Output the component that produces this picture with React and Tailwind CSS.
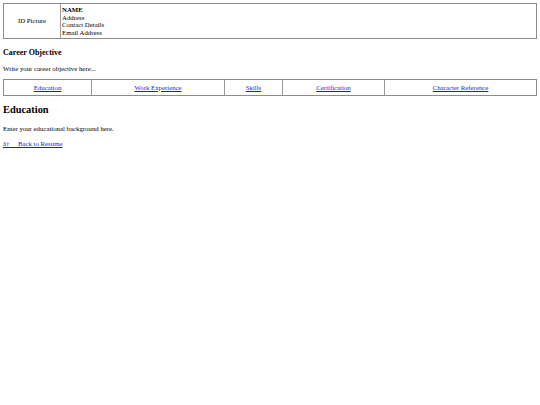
import React from 'react';

const navLinks = [
  { label: 'Education', width: 'w-[87px]' },
  { label: 'Work Experience', width: 'w-[133px]' },
  { label: 'Skills', width: 'w-[58px]' },
  { label: 'Certification', width: 'w-[102px]' },
  { label: 'Character Reference', width: 'flex-1' },
];

const App = () => {
  return (
    <div className="min-h-[405px] bg-white px-[3px] pt-[3px] text-black font-['Liberation_Serif',serif] text-[6.8px] leading-[7.5px]">
      {/* Header: picture + contact info */}
      <div className="flex h-[36px] border border-[#8c8c8c]">
        <div className="w-[57px] flex items-center justify-center border-r-[1.5px] border-[#9a9a9a]">
          ID Picture
        </div>
        <div className="flex-1 flex flex-col justify-center px-[1px]">
          <span className="font-bold">NAME</span>
          <span>Address</span>
          <span>Contact Details</span>
          <span>Email Address</span>
        </div>
      </div>

      <h3 className="mt-[8.5px] font-bold text-[8px] leading-[9px]">Career Objective</h3>
      <p className="mt-[8px]">Write your career objective here...</p>

      {/* Section navigation */}
      <div className="mt-[7px] flex h-[17px] border border-[#8c8c8c]">
        {navLinks.map((link, i) => (
          <div
            key={link.label}
            className={`${link.width} flex items-center justify-center ${i > 0 ? 'border-l-[1.5px] border-[#9a9a9a]' : ''}`}
          >
            <a href="#" className="text-[#1a1aee] underline">
              {link.label}
            </a>
          </div>
        ))}
      </div>

      <h2 className="mt-[8px] font-bold text-[10.4px] leading-[11.5px]">Education</h2>
      <p className="mt-[9px]">Enter your educational background here.</p>
      <p className="mt-[7.5px]">
        <a href="#" className="text-[#1a1aee] underline">
          â†&nbsp;&nbsp;&nbsp;&nbsp; Back to Resume
        </a>
      </p>
    </div>
  );
};

export default App;
